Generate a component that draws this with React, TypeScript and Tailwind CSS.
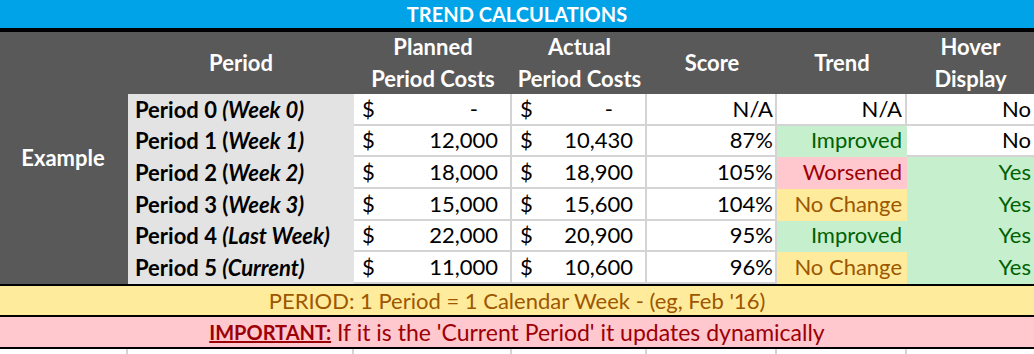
const rows = [
  { n: '0', pre: ' ', week: '(Week 0)', planned: '-', actual: '-', score: 'N/A', trend: 'N/A', hover: 'No' },
  { n: '1', pre: ' (', week: 'Week 1)', planned: '12,000', actual: '10,430', score: '87%', trend: 'Improved', hover: 'No' },
  { n: '2', pre: ' (', week: 'Week 2)', planned: '18,000', actual: '18,900', score: '105%', trend: 'Worsened', hover: 'Yes' },
  { n: '3', pre: ' (', week: 'Week 3)', planned: '15,000', actual: '15,600', score: '104%', trend: 'No Change', hover: 'Yes' },
  { n: '4', pre: ' ', week: '(Last Week)', planned: '22,000', actual: '20,900', score: '95%', trend: 'Improved', hover: 'Yes' },
  { n: '5', pre: ' ', week: '(Current)', planned: '11,000', actual: '10,600', score: '96%', trend: 'No Change', hover: 'Yes' },
]

const trendStyle: Record<string, string> = {
  'N/A': 'bg-white text-black border-[#d4d4d4]',
  Improved: 'bg-[#c6efce] text-[#006100] border-[#c6efce]',
  Worsened: 'bg-[#ffc7ce] text-[#9c0006] border-[#ffc7ce]',
  'No Change': 'bg-[#ffeb9c] text-[#9c5700] border-[#ffeb9c]',
}

const grid = 'grid grid-cols-[226px_158px_135px_130px_130px_1fr]'

function Money({ value }: { value: string }) {
  return (
    <div className="flex items-center justify-between bg-white border-r-2 border-b-2 border-[#d4d4d4] pl-2 pr-3">
      <span>$</span>
      <span className={value === '-' ? 'pr-5' : ''}>{value}</span>
    </div>
  )
}

export default function App() {
  return (
    <div className="w-[1034px] h-[354px] bg-white overflow-hidden text-[22px] leading-none" style={{ fontFamily: 'Lato, "Open Sans", sans-serif' }}>
      {/* Title */}
      <div className="h-[28px] bg-[#00a2e8] flex items-center justify-center text-white font-bold text-[20px]">
        TREND CALCULATIONS
      </div>
      <div className="h-[4px] bg-black" />

      <div className="flex h-[252px]">
        {/* Example column spans header and body */}
        <div className="w-[128px] bg-[#595959] text-white font-bold flex items-center justify-center pr-[2px]">
          Example
        </div>

        <div className="flex-1 flex flex-col">
          {/* Header */}
          <div className={`${grid} h-[62px] bg-[#595959] text-white font-bold text-center`}>
            <div className="flex items-center justify-center">Period</div>
            <div className="flex flex-col items-center justify-center gap-[10px]">
              <span>Planned</span>
              <span>Period Costs</span>
            </div>
            <div className="flex flex-col items-center justify-center gap-[10px]">
              <span>Actual</span>
              <span>Period Costs</span>
            </div>
            <div className="flex items-center justify-center">Score</div>
            <div className="flex items-center justify-center">Trend</div>
            <div className="flex flex-col items-center justify-center gap-[10px]">
              <span>Hover</span>
              <span>Display</span>
            </div>
          </div>

          {/* Body */}
          <div className={`${grid} flex-1 grid-rows-6 text-black`}>
            {rows.map((r) => (
              <>
                <div key={`l${r.n}`} className="bg-[#e3e3e3] font-bold flex items-center pl-[7px]">
                  <span className="whitespace-pre">
                    Period {r.n}
                    {r.pre}
                    <i>{r.week}</i>
                  </span>
                </div>
                <Money value={r.planned} />
                <Money value={r.actual} />
                <div className="bg-white border-r-2 border-b-2 border-[#d4d4d4] flex items-center justify-end pr-[2px]">
                  {r.score}
                </div>
                <div className={`${trendStyle[r.trend]} border-r-2 border-b-2 flex items-center justify-end pr-[3px]`}>
                  {r.trend}
                </div>
                <div
                  className={`${
                    r.hover === 'Yes'
                      ? 'bg-[#c6efce] text-[#006100] border-[#c6efce]'
                      : 'bg-white text-black border-[#d4d4d4]'
                  } border-b-2 flex items-center justify-end pr-[3px]`}
                >
                  {r.hover}
                </div>
              </>
            ))}
          </div>
        </div>
      </div>

      {/* Notes */}
      <div className="border-y-2 border-black h-[33px] bg-[#ffeb9c] text-[#9c5700] flex items-center justify-center">
        PERIOD: 1 Period = 1 Calendar Week - (eg, Feb '16)
      </div>
      <div className="border-b-2 border-black h-[32px] bg-[#ffc7ce] text-[#9c0006] text-[23px] flex items-center justify-center">
        <span className="font-bold underline text-[20px]">IMPORTANT:</span>
        <span>&nbsp;If it is the 'Current Period' it updates dynamically</span>
      </div>
      <div className="flex h-[6px]">
        <div className="w-[128px] border-r-2 border-[#d4d4d4]" />
        <div className="w-[226px] border-r-2 border-[#d4d4d4]" />
        <div className="w-[158px] border-r-2 border-[#d4d4d4]" />
        <div className="w-[135px] border-r-2 border-[#d4d4d4]" />
        <div className="w-[130px] border-r-2 border-[#d4d4d4]" />
        <div className="w-[130px] border-r-2 border-[#d4d4d4]" />
      </div>
    </div>
  )
}
